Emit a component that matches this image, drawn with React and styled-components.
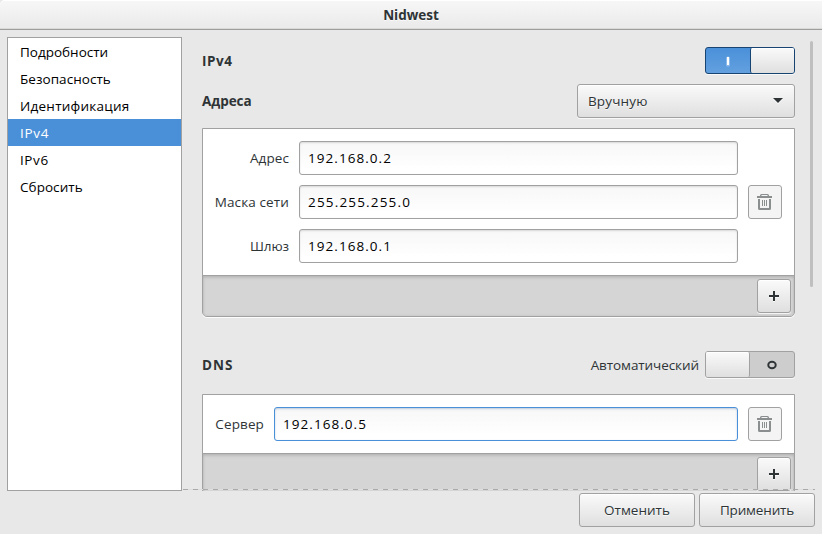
import React from "react";
import styled, { createGlobalStyle, css } from "styled-components";

const GlobalStyle = createGlobalStyle`
  * { box-sizing: border-box; }
  body { margin: 0; background: #e8e8e8; }
`;

const BORDER = "#a1a1a1";

const Window = styled.div`
  width: 822px;
  height: 534px;
  display: flex;
  flex-direction: column;
  background: #e8e8e8;
  color: #2e3436;
  font: 13.5px/20px "Open Sans", "Noto Sans", sans-serif;
  overflow: hidden;
`;

const TitleBar = styled.header`
  flex: none;
  height: 30px;
  display: flex;
  align-items: center;
  justify-content: center;
  border-bottom: 1px solid #9d9f9c;
  box-shadow: inset 0 1px #fff, inset 0 -1px #dadbd8;
  background: linear-gradient(#f7f7f7, #eaeaea);
  border-radius: 5px 0 0 0;
`;

const Label = styled.span`
  white-space: pre;
  letter-spacing: ${(p) => p.$spacing || 0}px;
  font-weight: ${(p) => (p.$bold ? 700 : 400)};
  text-shadow: ${(p) => (p.$etched ? "0 1px rgba(255,255,255,0.75)" : "none")};
`;

const Body = styled.main`
  flex: none;
  height: 461px;
  display: flex;
  padding-left: 7px;
`;

const Sidebar = styled.nav`
  flex: none;
  width: 175px;
  height: 454px;
  margin-top: 7px;
  border: 1px solid ${BORDER};
  background: #fff;
`;

const SidebarItem = styled.div`
  display: flex;
  align-items: center;
  height: 27px;
  padding-left: 12px;
  color: ${(p) => (p.$selected ? "#fff" : "#000")};
  background: ${(p) => (p.$selected ? "#4a90d9" : "transparent")};
`;

const Viewport = styled.section`
  position: relative;
  flex: 1;
  display: flex;
  overflow: hidden;
`;

const Content = styled.div`
  flex: none;
  width: 593px;
  margin-left: 20px;
  padding-top: 17px;
`;

const ScrollTrack = styled.div`
  padding: 11px 0 0 15px;
`;

const ScrollThumb = styled.div`
  width: 3px;
  height: 246px;
  border-radius: 2px;
  background: #bfbfc0;
`;

const Undershoot = styled.div`
  position: absolute;
  left: 1px;
  right: 7px;
  bottom: 1px;
  height: 1px;
  background: repeating-linear-gradient(90deg, #aaa 0 5px, #dedede 5px 10px);
`;

const SettingRow = styled.div`
  display: flex;
  align-items: center;
  justify-content: space-between;
  height: ${(p) => p.$height}px;
  margin-top: ${(p) => p.$top || 0}px;
`;

const Labelled = styled.div`
  display: flex;
  align-items: center;
  gap: 6px;
`;

const SwitchTrack = styled.div`
  display: flex;
  width: 90px;
  height: 27px;
  border: 1px solid ${(p) => (p.$on ? "#184472" : BORDER)};
  border-radius: 3px;
  box-shadow: 0 1px rgba(255, 255, 255, 0.75);
  background: ${(p) => (p.$on ? "linear-gradient(#4a90d9, #63a0df)" : "#cdcdcd")};
  flex-direction: ${(p) => (p.$on ? "row" : "row-reverse")};
`;

const SwitchMark = styled.div`
  flex: 1;
  display: flex;
  align-items: center;
  justify-content: center;
`;

const raised = css`
  background: linear-gradient(#fafafa, #dfdfdf);
  box-shadow: inset 0 1px rgba(255, 255, 255, 0.9);
`;

const SwitchKnob = styled.div`
  width: 44px;
  ${raised}
  border: 0 solid ${(p) => (p.$on ? "#184472" : BORDER)};
  border-left-width: ${(p) => (p.$on ? 1 : 0)}px;
  border-right-width: ${(p) => (p.$on ? 0 : 1)}px;
  border-radius: 2px;
`;

const ComboBox = styled.div`
  display: flex;
  align-items: center;
  justify-content: space-between;
  width: 218px;
  height: 34px;
  padding: 0 11px 0 10px;
  border: 1px solid ${BORDER};
  border-radius: 3px;
  background: linear-gradient(#fafafa, #dfdfdf);
  box-shadow: inset 0 1px #fff, 0 1px rgba(255, 255, 255, 0.75);
`;

const Frame = styled.div`
  margin-top: ${(p) => p.$top}px;
  border: 1px solid ${BORDER};
  border-radius: 0 0 5px 5px;
  box-shadow: 0 1px rgba(255, 255, 255, 0.9);
  background: #d5d5d5;
`;

const EntryList = styled.div`
  display: flex;
  align-items: center;
  gap: 10px;
  padding: 12px;
  background: #fff;
`;

const Fields = styled.div`
  flex: 1;
  display: grid;
  grid-template-columns: ${(p) => p.$labelWidth}px 1fr;
  gap: 10px;
  align-items: center;
  justify-items: end;
`;

const Entry = styled.div`
  width: 100%;
  height: 34px;
  display: flex;
  align-items: center;
  padding-left: 8px;
  color: #000;
  border: 1px solid ${(p) => (p.$focused ? "#4a90d9" : BORDER)};
  border-radius: 3px;
  background: linear-gradient(#f7f7f7, #fff 85%);
  box-shadow: inset 0 1px 2px ${(p) => (p.$focused ? "rgba(60,100,150,0.3)" : "rgba(0,0,0,0.13)")};
`;

const IconButton = styled.button`
  flex: none;
  width: 34px;
  height: 34px;
  display: flex;
  align-items: center;
  justify-content: center;
  padding: 0;
  border: 1px solid ${BORDER};
  border-radius: 3px;
  background: ${(p) => (p.$disabled ? "#f4f4f4" : "linear-gradient(#fafafa, #dfdfdf)")};
  box-shadow: ${(p) => (p.$disabled ? "none" : "inset 0 1px #fff, 0 1px rgba(255,255,255,0.75)")};
`;

const InlineToolbar = styled.div`
  height: 41px;
  display: flex;
  justify-content: flex-end;
  align-items: flex-start;
  padding: 3px 3px 0 0;
  border-top: 1px solid ${BORDER};
  border-radius: 0 0 4px 4px;
  background: #d5d5d5;
  box-shadow: inset 0 2px 3px rgba(0, 0, 0, 0.1), inset 0 0 3px rgba(0, 0, 0, 0.1);
`;

const ActionBar = styled.footer`
  display: flex;
  justify-content: flex-end;
  gap: 4px;
  padding: 2px 7px 0 0;
`;

const Button = styled.button`
  width: 116px;
  height: 34px;
  display: flex;
  align-items: center;
  justify-content: center;
  padding: 0;
  color: inherit;
  font: inherit;
  border: 1px solid ${BORDER};
  border-radius: 3px;
  background: linear-gradient(#fafafa, #dfdfdf);
  box-shadow: inset 0 1px #fff;
`;

const OnMark = () => (
  <svg width="6" height="12" viewBox="0 0 6 12">
    <rect x="1" y="1.5" width="4" height="10" rx="1.5" fill="#9cc6f0" opacity="0.7" />
    <rect x="2" y="2" width="2" height="8" fill="#fff" />
  </svg>
);

const OffMark = () => (
  <svg width="10" height="10" viewBox="0 0 10 10">
    <ellipse cx="5" cy="5" rx="3.700" ry="3.200" fill="none" stroke="#2e3436" strokeWidth="2" />
  </svg>
);

const Switch = ({ on }) => (
  <SwitchTrack $on={on}>
    <SwitchMark>{on ? <OnMark /> : <OffMark />}</SwitchMark>
    <SwitchKnob $on={on} />
  </SwitchTrack>
);

const TrashIcon = () => (
  <svg width="16" height="16" viewBox="0 0 16 16" fill="#8b8e8f">
    <path d="M3 2V1.5Q3 0 4.5 0h6Q12 0 12 1.5V2h3v2H0V2zM4.500 2h6V1h-6z" fillRule="evenodd" />
    <path d="M1 5h2v9h9V5h2v9.5Q14 16 12.500 16h-10Q1 16 1 14.500z" />
    <path d="M5 6h1v6H5zM7 6h1v6H7zM9 6h1v6H9z" />
  </svg>
);

const PlusIcon = () => (
  <svg width="16" height="16" viewBox="0 0 16 16">
    <path d="M3 8h10v2H3zM7 4h2v10H7z" fill="#fff" opacity="0.7" />
    <path d="M3 7h10v2H3zM7 3h2v10H7z" fill="#2e3436" />
  </svg>
);

const Arrow = () => (
  <svg width="10" height="8" viewBox="0 0 10 8">
    <path d="M0 2h10L5 7z" fill="#fff" />
    <path d="M0 1h10L5 6z" fill="#2e3436" />
  </svg>
);

const sections = [
  ["Подробности", 0],
  ["Безопасность", 0.05],
  ["Идентификация", 0.25],
  ["IPv4", 0.7],
  ["IPv6", 0.6],
  ["Сбросить", 0.05],
];

const addressFields = [
  ["Адрес", 0.1, "192.168.0.2", 1.05],
  ["Маска сети", 0.12, "255.255.255.0", 1.17],
  ["Шлюз", -0.1, "192.168.0.1", 1.05],
];

const dnsFields = [["Сервер", 0.12, "192.168.0.5", 1.05]];

const AddressGroup = ({ top, labelWidth, fields, focused }) => (
  <Frame $top={top}>
    <EntryList>
      <Fields $labelWidth={labelWidth}>
        {fields.map(([name, nameSpacing, value, valueSpacing]) => (
          <React.Fragment key={name}>
            <Label $spacing={nameSpacing}>{name}</Label>
            <Entry $focused={focused}>
              <Label $spacing={valueSpacing}>{value}</Label>
            </Entry>
          </React.Fragment>
        ))}
      </Fields>
      <IconButton $disabled aria-label="Удалить">
        <TrashIcon />
      </IconButton>
    </EntryList>
    <InlineToolbar>
      <IconButton aria-label="Добавить">
        <PlusIcon />
      </IconButton>
    </InlineToolbar>
  </Frame>
);

export default function App() {
  return (
    <>
      <GlobalStyle />
      <Window>
        <TitleBar>
          <Label $bold $etched>Nidwest</Label>
        </TitleBar>
        <Body>
          <Sidebar>
            {sections.map(([name, spacing], i) => (
              <SidebarItem key={name} $selected={i === 3}>
                <Label $spacing={spacing}>{name}</Label>
              </SidebarItem>
            ))}
          </Sidebar>
          <Viewport>
            <Content>
              <SettingRow $height={27}>
                <Label $bold $spacing={0.5}>IPv4</Label>
                <Switch on />
              </SettingRow>
              <SettingRow $height={34} $top={10}>
                <Label $bold $spacing={-0.05}>Адреса</Label>
                <ComboBox>
                  <Label $spacing={0.15} $etched>Вручную</Label>
                  <Arrow />
                </ComboBox>
              </SettingRow>
              <AddressGroup top={10} labelWidth={74} fields={addressFields} />
              <SettingRow $height={27} $top={34}>
                <Label $bold $spacing={1}>DNS</Label>
                <Labelled>
                  <Label $spacing={-0.08}>Автоматический</Label>
                  <Switch on={false} />
                </Labelled>
              </SettingRow>
              <AddressGroup top={16} labelWidth={49} fields={dnsFields} focused />
            </Content>
            <ScrollTrack>
              <ScrollThumb />
            </ScrollTrack>
            <Undershoot />
          </Viewport>
        </Body>
        <ActionBar>
          <Button>
            <Label $etched>Отменить</Label>
          </Button>
          <Button>
            <Label $spacing={-0.15} $etched>Применить</Label>
          </Button>
        </ActionBar>
      </Window>
    </>
  );
}
